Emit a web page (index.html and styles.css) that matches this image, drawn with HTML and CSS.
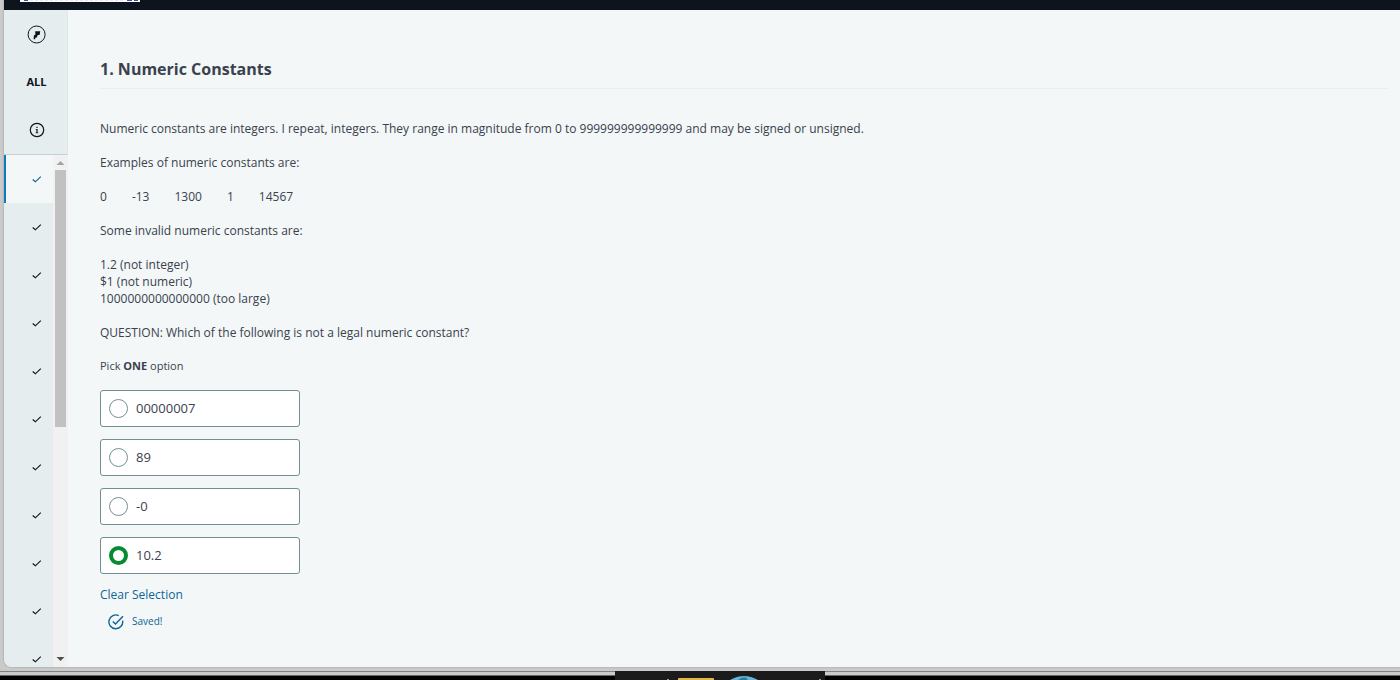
FILE: index.html
```html
<!DOCTYPE html>
<html lang="en">
<head>
<meta charset="utf-8">
<title>Numeric Constants</title>
<link rel="stylesheet" href="styles.css">
</head>
<body>
<svg class="defs" aria-hidden="true">
  <symbol id="check" viewBox="0 0 10 8"><path d="M.7 4.500 3.400 6.800 8.800 1.700" fill="none" stroke="currentColor" stroke-width="1.150"/></symbol>
</svg>
<div class="window">
  <header class="topbar">
    <div class="brand"><svg width="120" height="2" viewBox="0 0 120 2" aria-hidden="true"><path d="M4 .5h4M107 .5h5M114 .5h4" stroke="#4a45a8"/><path d="M10 .5h95" stroke="#b5b3da" stroke-dasharray="3 2" opacity=".3"/></svg></div>
  </header>
  <div class="workspace">
    <nav class="sidebar" aria-label="Questions">
      <div class="tools">
        <button class="tool" aria-label="Overview"><svg width="20" height="20" viewBox="0 0 20 20"><circle cx="9.600" cy="10.500" r="8.500" fill="none" stroke="currentColor" stroke-width="1"/><path d="M8.200 7.200h5l-.5 3.600-2.200.5-.5 1.900-1.500.5-.5 1.600H6.600l.3-3.800 1.500-.9z" fill="currentColor"/></svg></button>
        <button class="tool">ALL</button>
        <button class="tool" aria-label="Information"><svg width="16" height="16" viewBox="0 0 16 16"><circle cx="8" cy="8" r="6.700" fill="none" stroke="currentColor" stroke-width="1.200"/><path d="M7.400 4.700h1.200v1.200H7.400zM6.700 7h1.900v3.500h.7v.7H6.700v-.7h.7V7.700h-.7z" fill="currentColor"/></svg></button>
      </div>
      <div class="scroller">
        <div class="list">
          <button class="item active" aria-label="Question 1"><svg class="check"><use href="#check"/></svg></button>
          <button class="item" aria-label="Question 2"><svg class="check"><use href="#check"/></svg></button>
          <button class="item" aria-label="Question 3"><svg class="check"><use href="#check"/></svg></button>
          <button class="item" aria-label="Question 4"><svg class="check"><use href="#check"/></svg></button>
          <button class="item" aria-label="Question 5"><svg class="check"><use href="#check"/></svg></button>
          <button class="item" aria-label="Question 6"><svg class="check"><use href="#check"/></svg></button>
          <button class="item" aria-label="Question 7"><svg class="check"><use href="#check"/></svg></button>
          <button class="item" aria-label="Question 8"><svg class="check"><use href="#check"/></svg></button>
          <button class="item" aria-label="Question 9"><svg class="check"><use href="#check"/></svg></button>
          <button class="item" aria-label="Question 10"><svg class="check"><use href="#check"/></svg></button>
          <button class="item" aria-label="Question 11"><svg class="check"><use href="#check"/></svg></button>
        </div>
        <div class="scrollbar" aria-hidden="true">
          <svg class="arrow" viewBox="0 0 15 15"><path d="M3.500 10h8L7.500 6z" fill="#a3a3a3"/></svg>
          <div class="track"><div class="thumb"></div></div>
          <svg class="arrow" viewBox="0 0 15 15"><path d="M3.500 5h8l-4 4z" fill="#505050"/></svg>
        </div>
      </div>
    </nav>
    <main class="content">
      <h1>1. Numeric Constants</h1>
      <section class="statement">
        <p>Numeric constants are integers. I repeat, integers. They range in magnitude from 0 to 999999999999999 and may be signed or unsigned.</p>
        <p>Examples of numeric constants are:</p>
        <p class="samples"><span>0</span><span>-13</span><span>1300</span><span>1</span><span>14567</span></p>
        <p>Some invalid numeric constants are:</p>
        <p>1.2 (not integer)<br>$1 (not numeric)<br>1000000000000000 (too large)</p>
        <p>QUESTION: Which of the following is not a legal numeric constant?</p>
      </section>
      <form class="answers">
        <p class="hint">Pick <b>ONE</b> option</p>
        <label class="option"><input type="radio" name="answer"><span>00000007</span></label>
        <label class="option"><input type="radio" name="answer"><span>89</span></label>
        <label class="option"><input type="radio" name="answer"><span>-0</span></label>
        <label class="option"><input type="radio" name="answer" checked><span>10.2</span></label>
      </form>
      <button class="clear">Clear Selection</button>
      <div class="saved"><svg width="16" height="16" viewBox="0 0 16 16" fill="none" stroke="currentColor" stroke-width="1.400"><path d="M10.800 1.600A6.900 6.900 0 1 0 14.600 6.600"/><path d="M4.800 7.500 7.500 10.100 15 2.200"/></svg><span>Saved!</span></div>
    </main>
  </div>
</div>
<footer class="frame">
  <div class="rail"></div>
  <div class="dock"><svg width="210" height="9" viewBox="0 0 210 9" aria-hidden="true"><path d="M52 8h2v1h-2zM204 8h2v1h-2z" fill="#999"/><path d="M63 9V8q0-1 1-1h34q1 0 1 1v1z" fill="#e3b647"/><path d="M115 9Q129 1 143 9z" fill="#68b4d8"/><path d="M123 9l4-2.500h4l2 2.500z" fill="#287f9a"/></svg></div>
</footer>
</body>
</html>
```
FILE: styles.css
```css
* {
  box-sizing: border-box;
}

body {
  margin: 0;
  height: 100vh;
  display: flex;
  flex-direction: column;
  overflow: hidden;
  background: #cbcaca;
  color: #39424e;
  font: 12px/17px "Open Sans", "Noto Sans", sans-serif;
}

button {
  border: 0;
  padding: 0;
  background: none;
  color: inherit;
  font: inherit;
  cursor: pointer;
}

h1,
p {
  margin: 0;
}

.defs {
  display: none;
}

.window {
  flex: 1;
  min-height: 0;
  margin-left: 4px;
  display: flex;
  flex-direction: column;
  overflow: hidden;
  border-bottom-left-radius: 8px;
  box-shadow: 0 0 2px #888;
}

.topbar {
  height: 10px;
  flex: none;
  padding-left: 16px;
  background: #0e141e;
}

.brand {
  width: 120px;
  height: 2px;
  background: #fff;
}

.brand svg {
  display: block;
}

.workspace {
  flex: 1;
  min-height: 0;
  display: flex;
  background: #f3f7f7;
}

.sidebar {
  width: 64px;
  flex: none;
  display: flex;
  flex-direction: column;
  background: #e5edef;
  color: #0e141e;
}

.tools {
  border-right: 1px solid #dfe7e9;
  border-bottom: 1px solid #c2d1d6;
}

.tool {
  width: 100%;
  height: 48px;
  display: flex;
  align-items: center;
  justify-content: center;
  padding-left: 2px;
  font-size: 11px;
  line-height: 16px;
  font-weight: 700;
}

.scroller {
  flex: 1;
  min-height: 0;
  display: flex;
}

.list {
  flex: 1;
  overflow: hidden;
}

.item {
  width: 100%;
  height: 48px;
  display: flex;
  align-items: center;
  padding-left: 28px;
}

.item.active {
  border-left: 2px solid #0b7dbf;
  padding-left: 26px;
  background: #f3f7f7;
  color: #0b6595;
}

.check {
  width: 10px;
  height: 8px;
}

.scrollbar {
  width: 15px;
  display: flex;
  flex-direction: column;
  background: #f1f1f1;
}

.arrow {
  width: 15px;
  height: 15px;
  flex: none;
}

.track {
  flex: 1;
  padding: 0 2px;
}

.thumb {
  height: 53.4%;
  background: #c1c1c1;
}

.content {
  flex: 1;
  min-width: 0;
  padding: 48px 12px 0 32px;
}

h1 {
  padding-bottom: 8px;
  border-bottom: 1px solid #e7eeef;
  font-size: 16px;
  line-height: 22px;
}

.statement {
  display: flex;
  flex-direction: column;
  gap: 17px;
  padding-top: 31px;
}

.samples {
  display: flex;
  gap: 25px;
}

.answers {
  display: flex;
  flex-direction: column;
  gap: 12px;
  padding-top: 16px;
}

.hint {
  padding-bottom: 4px;
  font-size: 11px;
}

.option {
  width: 200px;
  height: 37px;
  display: flex;
  align-items: center;
  gap: 8px;
  padding-left: 8px;
  border: 1px solid #738f93;
  border-radius: 3px;
  background: #fff;
  font-size: 13px;
}

.option input {
  appearance: none;
  width: 19px;
  height: 19px;
  margin: 0;
  border: 1px solid #738f93;
  border-radius: 50%;
  background: #fff;
}

.option input:checked {
  border: 4px solid #078b32;
}

.clear {
  display: block;
  margin-top: 12px;
  color: #0b6595;
}

.saved {
  display: flex;
  align-items: center;
  gap: 8px;
  padding: 10px 8px;
  color: #0b6595;
  font-size: 10px;
}

.frame {
  position: relative;
  height: 13px;
  flex: none;
  padding-top: 4px;
  border-bottom: 4px solid #000;
}

.rail {
  height: 5px;
  border-top: 1px solid #808080;
  border-bottom: 1px solid #666;
}

.dock {
  position: absolute;
  left: 615px;
  top: 4px;
  width: 210px;
  height: 9px;
  background: #1b1b1b;
}

.dock svg {
  display: block;
}
```
